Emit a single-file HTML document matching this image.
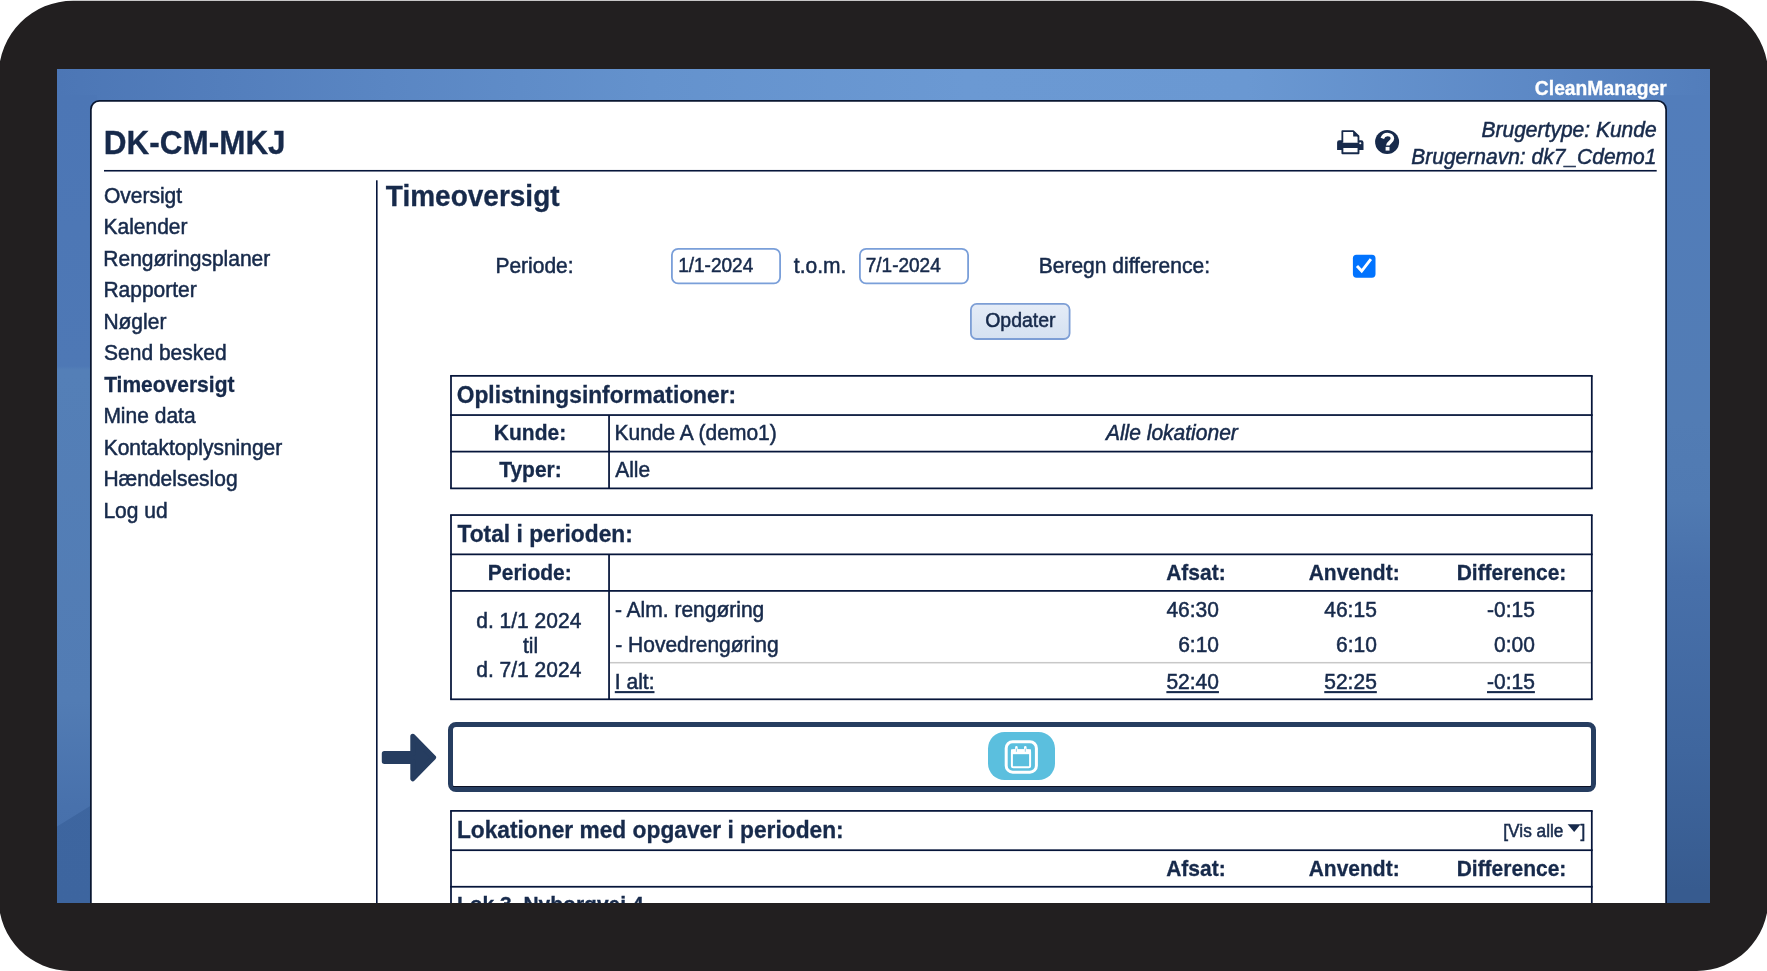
<!DOCTYPE html>
<html><head><meta charset="utf-8"><title>Timeoversigt</title>
<style>
html,body{margin:0;padding:0;}
body{width:1767px;height:971px;overflow:hidden;background:#fff;position:relative;font-family:"Liberation Sans",sans-serif;color:#172a4b;}
.t{position:absolute;line-height:1;white-space:nowrap;-webkit-text-stroke:0.5px currentColor;transform:scaleY(1.04);}
.b{position:absolute;}
#bezel{position:absolute;left:0;top:0;}
#screen{position:absolute;left:57px;top:68.6px;width:1653px;height:834.4px;overflow:hidden;
 background:linear-gradient(to right, #4c76b5 0%, #5a86c3 20%, #6492cd 36%, #6b99d3 55%, #6a98d2 72%, #5c88c5 90%, #527dbb 100%);}
#ls{position:absolute;left:0;top:26px;width:40px;height:810px;
 background:linear-gradient(to bottom, rgb(76,118,181) 0px, rgb(78,120,181) 271px, rgb(84,127,183) 275px, rgb(82,124,180) 606px, rgb(72,113,172) 711px, rgb(68,109,168) 810px);}
#ls:after{content:"";position:absolute;left:0;top:0;width:40px;height:810px;
 background:linear-gradient(to bottom, rgb(65,105,163), rgb(61,101,159));clip-path:polygon(0 732px, 34px 711px, 40px 707px, 40px 810px, 0 810px);}
#rs{position:absolute;right:0;top:26px;width:50px;height:810px;
 background:linear-gradient(to bottom, rgb(82,125,187) 0px, rgb(82,124,180) 326px, rgb(80,122,178) 406px, rgb(72,112,170) 481px, rgb(63,102,158) 656px, rgb(55,91,143) 795px);}
#clip{position:absolute;left:57px;top:68.6px;width:1653px;height:834.4px;overflow:hidden;}
#clip > #inner{position:absolute;left:-57px;top:-68.6px;width:1767px;height:971px;z-index:0;transform:translateZ(0);}
</style></head><body>
<svg id="bezel" width="1767" height="971" viewBox="0 0 1767 971"><path d="M 73.2 0.7 H 1693.8 A 74.5 74.5 0 0 1 1768.3 75.2 V 899.4 A 71.5 71.5 0 0 1 1696.8 970.9 H 70.2 A 71.5 71.5 0 0 1 -1.3 899.4 V 75.2 A 74.5 74.5 0 0 1 73.2 0.7 Z" fill="#221f20"/></svg>
<div id="screen"><div id="ls"></div><div id="rs"></div></div>
<div id="clip"><div id="inner">
<div class="t" style="left:1534.85px;top:79px;font-size:19.3px;transform-origin:0 16px;font-weight:bold;-webkit-text-stroke-width:0.3px;color:#fff;">CleanManager</div>
<div class="t" style="left:103.68px;top:128px;font-size:31.5px;transform-origin:0 26px;font-weight:bold;-webkit-text-stroke-width:0.3px;">DK-CM-MKJ</div>
<div class="t" style="left:1481.53px;top:119px;font-size:21px;transform-origin:0 18px;font-style:italic;">Brugertype: Kunde</div>
<div class="t" style="left:1411.27px;top:146px;font-size:21px;transform-origin:0 18px;font-style:italic;">Brugernavn: dk7_Cdemo1</div>
<div class="t" style="left:103.89px;top:185px;font-size:21px;transform-origin:0 18px;">Oversigt</div>
<div class="t" style="left:103.48px;top:216px;font-size:21px;transform-origin:0 18px;">Kalender</div>
<div class="t" style="left:103.33px;top:248px;font-size:21px;transform-origin:0 18px;">Rengøringsplaner</div>
<div class="t" style="left:103.38px;top:279px;font-size:21px;transform-origin:0 18px;">Rapporter</div>
<div class="t" style="left:103.38px;top:311px;font-size:21px;transform-origin:0 18px;">Nøgler</div>
<div class="t" style="left:104.04px;top:342px;font-size:21px;transform-origin:0 18px;">Send besked</div>
<div class="t" style="left:104.14px;top:374px;font-size:21px;transform-origin:0 18px;font-weight:bold;-webkit-text-stroke-width:0.3px;">Timeoversigt</div>
<div class="t" style="left:103.38px;top:405px;font-size:21px;transform-origin:0 18px;">Mine data</div>
<div class="t" style="left:103.65px;top:437px;font-size:21px;transform-origin:0 18px;">Kontaktoplysninger</div>
<div class="t" style="left:103.38px;top:468px;font-size:21px;transform-origin:0 18px;">Hændelseslog</div>
<div class="t" style="left:103.38px;top:500px;font-size:21px;transform-origin:0 18px;">Log ud</div>
<div class="t" style="left:385.80px;top:183px;font-size:28px;transform-origin:0 23px;font-weight:bold;-webkit-text-stroke-width:0.3px;">Timeoversigt</div>
<div class="t" style="left:495.39px;top:255px;font-size:21px;transform-origin:0 18px;">Periode:</div>
<div class="t" style="left:793.84px;top:255px;font-size:21px;transform-origin:0 18px;">t.o.m.</div>
<div class="t" style="left:1038.74px;top:255px;font-size:21px;transform-origin:0 18px;">Beregn difference:</div>
<div class="t" style="left:678.20px;top:256px;font-size:19px;transform-origin:0 16px;">1/1-2024</div>
<div class="t" style="left:865.75px;top:256px;font-size:19px;transform-origin:0 16px;">7/1-2024</div>
<div class="t" style="left:985.17px;top:311px;font-size:19.5px;transform-origin:0 16px;">Opdater</div>
<div class="t" style="left:456.78px;top:384px;font-size:22.75px;transform-origin:0 19px;font-weight:bold;-webkit-text-stroke-width:0.3px;">Oplistningsinformationer:</div>
<div class="t" style="left:493.84px;top:422px;font-size:21px;transform-origin:0 18px;font-weight:bold;-webkit-text-stroke-width:0.3px;">Kunde:</div>
<div class="t" style="left:614.47px;top:422px;font-size:21px;transform-origin:0 18px;">Kunde A (demo1)</div>
<div class="t" style="left:1105.91px;top:422px;font-size:21px;transform-origin:0 18px;font-style:italic;">Alle lokationer</div>
<div class="t" style="left:499.14px;top:459px;font-size:21px;transform-origin:0 18px;font-weight:bold;-webkit-text-stroke-width:0.3px;">Typer:</div>
<div class="t" style="left:615.14px;top:459px;font-size:21px;transform-origin:0 18px;">Alle</div>
<div class="t" style="left:457.53px;top:523px;font-size:22.75px;transform-origin:0 19px;font-weight:bold;-webkit-text-stroke-width:0.3px;">Total i perioden:</div>
<div class="t" style="left:487.73px;top:562px;font-size:21px;transform-origin:0 18px;font-weight:bold;-webkit-text-stroke-width:0.3px;">Periode:</div>
<div class="t" style="left:1166.14px;top:562px;font-size:21px;transform-origin:0 18px;font-weight:bold;-webkit-text-stroke-width:0.3px;">Afsat:</div>
<div class="t" style="left:1308.67px;top:562px;font-size:21px;transform-origin:0 18px;font-weight:bold;-webkit-text-stroke-width:0.3px;">Anvendt:</div>
<div class="t" style="left:1456.63px;top:562px;font-size:21px;transform-origin:0 18px;font-weight:bold;-webkit-text-stroke-width:0.3px;">Difference:</div>
<div class="t" style="left:476.22px;top:610px;font-size:21px;transform-origin:0 18px;">d. 1/1 2024</div>
<div class="t" style="left:522.97px;top:635px;font-size:21px;transform-origin:0 18px;">til</div>
<div class="t" style="left:476.22px;top:659px;font-size:21px;transform-origin:0 18px;">d. 7/1 2024</div>
<div class="t" style="left:614.92px;top:599px;font-size:21px;transform-origin:0 18px;">- Alm. rengøring</div>
<div class="t" style="left:615.22px;top:634px;font-size:21px;transform-origin:0 18px;">- Hovedrengøring</div>
<div class="t" style="left:614.80px;top:671px;font-size:21px;transform-origin:0 18px;text-decoration:underline;text-decoration-thickness:1.6px;text-underline-offset:1.8px;">I alt:</div>
<div class="t" style="left:1166.38px;top:599px;font-size:21px;transform-origin:0 18px;">46:30</div>
<div class="t" style="left:1324.28px;top:599px;font-size:21px;transform-origin:0 18px;">46:15</div>
<div class="t" style="left:1487.02px;top:599px;font-size:21px;transform-origin:0 18px;">-0:15</div>
<div class="t" style="left:1178.17px;top:634px;font-size:21px;transform-origin:0 18px;">6:10</div>
<div class="t" style="left:1336.07px;top:634px;font-size:21px;transform-origin:0 18px;">6:10</div>
<div class="t" style="left:1493.97px;top:634px;font-size:21px;transform-origin:0 18px;">0:00</div>
<div class="t" style="left:1166.38px;top:671px;font-size:21px;transform-origin:0 18px;text-decoration:underline;text-decoration-thickness:1.6px;text-underline-offset:1.8px;">52:40</div>
<div class="t" style="left:1324.28px;top:671px;font-size:21px;transform-origin:0 18px;text-decoration:underline;text-decoration-thickness:1.6px;text-underline-offset:1.8px;">52:25</div>
<div class="t" style="left:1487.02px;top:671px;font-size:21px;transform-origin:0 18px;text-decoration:underline;text-decoration-thickness:1.6px;text-underline-offset:1.8px;">-0:15</div>
<div class="t" style="left:456.89px;top:819px;font-size:22.75px;transform-origin:0 19px;font-weight:bold;-webkit-text-stroke-width:0.3px;">Lokationer med opgaver i perioden:</div>
<div class="t" style="left:1503.32px;top:823px;font-size:17.25px;transform-origin:0 14px;">[Vis alle</div>
<div class="t" style="left:1580.38px;top:823px;font-size:17.25px;transform-origin:0 14px;">]</div>
<div class="t" style="left:1166.14px;top:858px;font-size:21px;transform-origin:0 18px;font-weight:bold;-webkit-text-stroke-width:0.3px;">Afsat:</div>
<div class="t" style="left:1308.67px;top:858px;font-size:21px;transform-origin:0 18px;font-weight:bold;-webkit-text-stroke-width:0.3px;">Anvendt:</div>
<div class="t" style="left:1456.63px;top:858px;font-size:21px;transform-origin:0 18px;font-weight:bold;-webkit-text-stroke-width:0.3px;">Difference:</div>
<div class="t" style="left:456.91px;top:894px;font-size:21px;transform-origin:0 18px;font-weight:bold;-webkit-text-stroke-width:0.3px;">Lok 3, Nyborgvej 4</div>
<svg class="b" style="left:88.10px;top:97.90px;z-index:-2;" width="1581.00" height="904.00" viewBox="88.10 97.90 1581.00 904.00"><rect x="90.97" y="100.78" width="1575.25" height="898.25" rx="8.5" fill="#fff" stroke="#0a1731" stroke-width="1.75"/></svg>
<svg class="b" style="left:669.00px;top:245.70px;z-index:-1;" width="114.00" height="40.30" viewBox="669.00 245.70 114.00 40.30"><rect x="671.90" y="248.60" width="108.20" height="34.50" rx="6.2" fill="#fff" stroke="#7a9fd9" stroke-width="1.8"/></svg>
<svg class="b" style="left:856.70px;top:245.70px;z-index:-1;" width="114.00" height="40.30" viewBox="856.70 245.70 114.00 40.30"><rect x="859.60" y="248.60" width="108.20" height="34.50" rx="6.2" fill="#fff" stroke="#7a9fd9" stroke-width="1.8"/></svg>
<svg class="b" style="left:1350px;top:252px" width="28" height="28" viewBox="1350 252 28 28"><rect x="1352.9" y="254.85" width="22.6" height="22.8" rx="3.6" fill="#0173fe"/><path d="M1357.0 266.0 L1361.7 271.1 L1370.9 259.2" fill="none" stroke="#fff" stroke-width="2.9" stroke-linecap="butt" stroke-linejoin="miter"/></svg>
<svg class="b" style="left:968.30px;top:301.20px;z-index:-1;" width="104.50" height="40.90" viewBox="968.30 301.20 104.50 40.90"><defs><linearGradient id="bg1" x1="0" y1="0" x2="0" y2="1"><stop offset="0" stop-color="#e5ecf7"/><stop offset="1" stop-color="#d5e1f1"/></linearGradient></defs><rect x="971.20" y="304.10" width="98.70" height="35.10" rx="5.8" fill="url(#bg1)" stroke="#7d9ed5" stroke-width="1.8"/></svg>
<svg class="b" style="left:0;top:0;z-index:-1" width="1767" height="971" viewBox="0 0 1767 971"><rect x="450.12" y="374.98" width="1142.55" height="1.75" fill="#06153a"/><rect x="450.12" y="414.18" width="1142.55" height="1.75" fill="#06153a"/><rect x="450.12" y="450.73" width="1142.55" height="1.75" fill="#06153a"/><rect x="450.12" y="487.52" width="1142.55" height="1.75" fill="#06153a"/><rect x="450.12" y="375.85" width="1.75" height="112.55" fill="#06153a"/><rect x="1590.92" y="375.85" width="1.75" height="112.55" fill="#06153a"/><rect x="608.17" y="415.05" width="1.75" height="73.35" fill="#06153a"/><rect x="450.12" y="514.17" width="1142.55" height="1.75" fill="#06153a"/><rect x="450.12" y="553.48" width="1142.55" height="1.75" fill="#06153a"/><rect x="450.12" y="590.02" width="1142.55" height="1.75" fill="#06153a"/><rect x="450.12" y="698.42" width="1142.55" height="1.75" fill="#06153a"/><rect x="609.92" y="661.95" width="981.00" height="1.50" fill="#c8c8c8"/><rect x="450.12" y="515.05" width="1.75" height="184.25" fill="#06153a"/><rect x="1590.92" y="515.05" width="1.75" height="184.25" fill="#06153a"/><rect x="608.17" y="554.35" width="1.75" height="144.95" fill="#06153a"/><rect x="450.12" y="810.02" width="1142.55" height="1.75" fill="#06153a"/><rect x="450.12" y="849.33" width="1142.55" height="1.75" fill="#06153a"/><rect x="450.12" y="885.88" width="1142.55" height="1.75" fill="#06153a"/><rect x="450.12" y="810.90" width="1.75" height="104.10" fill="#06153a"/><rect x="1590.92" y="810.90" width="1.75" height="104.10" fill="#06153a"/><rect x="104.00" y="169.95" width="1552.70" height="1.60" fill="#06153a"/><rect x="376.00" y="180.30" width="1.60" height="734.70" fill="#06153a"/></svg>
<div class="b" style="left:448.10px;top:722.00px;width:1147.80px;height:69.70px;box-sizing:border-box;border:5px solid #263d60;border-radius:8px;"></div>
<svg class="b" style="left:376px;top:728px" width="66" height="60" viewBox="376 728 66 60"><path d="M384.3 753.5 H412.8 V736.2 L433.6 757.4 L412.8 778.8 V761.4 H384.3 Z" fill="#263d60" stroke="#263d60" stroke-width="5" stroke-linejoin="round"/></svg>
<div class="b" style="left:453.00px;top:785.90px;width:1138.00px;height:0.90px;background:#0b1024;"></div>
<div class="b" style="left:987.90px;top:732.00px;width:67.00px;height:48.20px;background:#5bbfde;border-radius:16.5px;"></div>
<svg class="b" style="left:1000px;top:736px" width="42" height="42" viewBox="1000 736 42 42"><rect x="1006.2" y="741.7" width="30.2" height="30.5" rx="6.5" fill="none" stroke="#fff" stroke-width="3"/><rect x="1011.9" y="750.2" width="18.2" height="17" rx="1.5" fill="none" stroke="#fff" stroke-width="2"/><rect x="1011" y="749.4" width="20" height="4.8" fill="#fff"/><path d="M1016.4 747.4 v4 M1025.3 747.4 v4" stroke="#fff" stroke-width="2.6" stroke-linecap="round"/><path d="M1016.4 749 v2.4 M1025.3 749 v2.4" stroke="#5bbfde" stroke-width="0.7" stroke-linecap="round"/></svg>
<svg class="b" style="left:1567px;top:823px" width="15" height="10" viewBox="1567 823 15 10"><path d="M1567.6 824.2 H1580.6 L1574.2 832 Z" fill="#172a4b"/></svg>
<svg class="b" style="left:1335px;top:128px" width="30" height="28" viewBox="1335 128 30 28"><path d="M1339.3 140.3 h22 a2.2 2.2 0 0 1 2.2 2.2 v7.6 h-26.4 v-7.6 a2.2 2.2 0 0 1 2.2 -2.2 z" fill="#172a4b"/><path d="M1342.35 142.7 V131.05 h10.9 l5.2 5.2 V142.7" fill="#fff" stroke="#172a4b" stroke-width="1.8" stroke-linejoin="round"/><path d="M1353.2 131.2 v5.2 h5.2 z" fill="#172a4b"/><rect x="1342.4" y="147" width="16.1" height="6.2" fill="#fff" stroke="#172a4b" stroke-width="1.9" stroke-linejoin="round"/><circle cx="1360.3" cy="143.3" r="1.05" fill="#fff"/></svg>
<svg class="b" style="left:1373px;top:128px" width="28" height="28" viewBox="1373 128 28 28"><circle cx="1387.1" cy="142" r="12" fill="#172a4b"/><path d="M1382.3 138.4 c0.8 -2.6 2.8 -3.9 5.2 -3.9 c2.7 0 4.9 1.7 4.9 4.1 c0 3.3 -4.6 3.6 -4.6 7" fill="none" stroke="#fff" stroke-width="3.6" stroke-linejoin="round"/><rect x="1385.6" y="146.9" width="3.9" height="3.7" fill="#fff"/></svg>
</div></div>
</body></html>
